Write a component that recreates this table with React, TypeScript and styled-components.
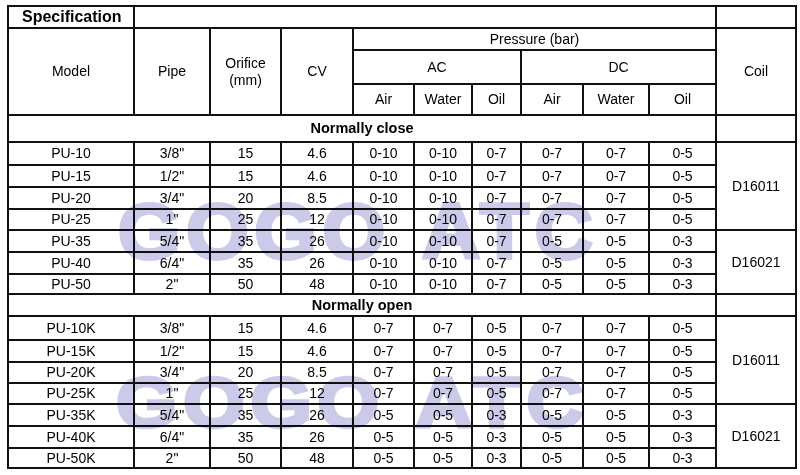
import React from "react";
import styled, { createGlobalStyle } from "styled-components";

const Global = createGlobalStyle`
  html, body { margin: 0; padding: 0; background: #fff; }
  body { font-family: "Liberation Sans", Arial, sans-serif; color: #000; }
`;

const Page = styled.div`
  position: relative;
  width: 800px;
  height: 475px;
  padding: 5px 0 0 7px;
  box-sizing: border-box;
  overflow: hidden;
`;

const Table = styled.table`
  border-collapse: collapse;
  table-layout: fixed;
  width: 788px;
  font-size: 14px;
  line-height: 1.15;
`;

const Row = styled.tr<{ $h: number }>`
  height: ${(p) => p.$h}px;
`;

const Cell = styled.td<{ $align?: "left" | "center"; $bold?: boolean; $size?: number }>`
  border: 2px solid #111;
  padding: 0;
  text-align: ${(p) => p.$align ?? "center"};
  vertical-align: middle;
  font-weight: ${(p) => (p.$bold ? 700 : 400)};
  font-size: ${(p) => (p.$size ? `${p.$size}px` : "inherit")};
  white-space: nowrap;
`;

const SpecCell = styled(Cell)`
  padding-left: 13px;
`;

const Watermark = styled.div<{ $top: number; $left: number; $sx: number; $sy: number }>`
  position: absolute;
  top: ${(p) => p.$top}px;
  left: ${(p) => p.$left}px;
  font-family: "Liberation Sans", Arial, sans-serif;
  font-weight: 700;
  font-size: 80px;
  line-height: 1;
  letter-spacing: 6px;
  word-spacing: 6px;
  white-space: nowrap;
  color: #cbcbe9;
  -webkit-text-stroke: 4px #cbcbe9;
  mix-blend-mode: multiply;
  pointer-events: none;
  transform-origin: 0 0;
  transform: scale(${(p) => p.$sx}, ${(p) => p.$sy});
`;

const colWidths = [126, 76, 71, 72, 61, 58, 49, 62, 66, 67, 80];

type DataRow = [string, string, string, string, string, string, string, string, string, string];

const closeRows: DataRow[] = [
  ["PU-10", '3/8"', "15", "4.6", "0-10", "0-10", "0-7", "0-7", "0-7", "0-5"],
  ["PU-15", '1/2"', "15", "4.6", "0-10", "0-10", "0-7", "0-7", "0-7", "0-5"],
  ["PU-20", '3/4"', "20", "8.5", "0-10", "0-10", "0-7", "0-7", "0-7", "0-5"],
  ["PU-25", '1"', "25", "12", "0-10", "0-10", "0-7", "0-7", "0-7", "0-5"],
  ["PU-35", '5/4"', "35", "26", "0-10", "0-10", "0-7", "0-5", "0-5", "0-3"],
  ["PU-40", '6/4"', "35", "26", "0-10", "0-10", "0-7", "0-5", "0-5", "0-3"],
  ["PU-50", '2"', "50", "48", "0-10", "0-10", "0-7", "0-5", "0-5", "0-3"],
];

const openRows: DataRow[] = [
  ["PU-10K", '3/8"', "15", "4.6", "0-7", "0-7", "0-5", "0-7", "0-7", "0-5"],
  ["PU-15K", '1/2"', "15", "4.6", "0-7", "0-7", "0-5", "0-7", "0-7", "0-5"],
  ["PU-20K", '3/4"', "20", "8.5", "0-7", "0-7", "0-5", "0-7", "0-7", "0-5"],
  ["PU-25K", '1"', "25", "12", "0-7", "0-7", "0-5", "0-7", "0-7", "0-5"],
  ["PU-35K", '5/4"', "35", "26", "0-5", "0-5", "0-3", "0-5", "0-5", "0-3"],
  ["PU-40K", '6/4"', "35", "26", "0-5", "0-5", "0-3", "0-5", "0-5", "0-3"],
  ["PU-50K", '2"', "50", "48", "0-5", "0-5", "0-3", "0-5", "0-5", "0-3"],
];

const closeHeights = [23, 22, 22, 21, 22, 22, 20];
const openHeights = [24, 22, 21, 21, 22, 22, 20];

function Section({
  title,
  titleH,
  rows,
  heights,
}: {
  title: string;
  titleH: number;
  rows: DataRow[];
  heights: number[];
}) {
  return (
    <>
      <Row $h={titleH}>
        <Cell colSpan={10} $bold $size={14.5}>
          {title}
        </Cell>
        <Cell />
      </Row>
      {rows.map((r, i) => (
        <Row key={r[0]} $h={heights[i]}>
          {r.map((v, j) => (
            <Cell key={j}>{v}</Cell>
          ))}
          {i === 0 && <Cell rowSpan={4}>D16011</Cell>}
          {i === 4 && <Cell rowSpan={3}>D16021</Cell>}
        </Row>
      ))}
    </>
  );
}

export default function App() {
  return (
    <Page>
      <Global />
      <Table>
        <colgroup>
          {colWidths.map((w, i) => (
            <col key={i} style={{ width: w }} />
          ))}
        </colgroup>
        <tbody>
          <Row $h={22}>
            <SpecCell $align="left" $bold $size={16}>
              Specification
            </SpecCell>
            <Cell colSpan={9} />
            <Cell />
          </Row>
          <Row $h={22}>
            <Cell rowSpan={3}>Model</Cell>
            <Cell rowSpan={3}>Pipe</Cell>
            <Cell rowSpan={3}>
              Orifice
              <br />
              (mm)
            </Cell>
            <Cell rowSpan={3}>CV</Cell>
            <Cell colSpan={6}>Pressure (bar)</Cell>
            <Cell rowSpan={3}>Coil</Cell>
          </Row>
          <Row $h={34}>
            <Cell colSpan={3}>AC</Cell>
            <Cell colSpan={3}>DC</Cell>
          </Row>
          <Row $h={31}>
            <Cell>Air</Cell>
            <Cell>Water</Cell>
            <Cell>Oil</Cell>
            <Cell>Air</Cell>
            <Cell>Water</Cell>
            <Cell>Oil</Cell>
          </Row>
          <Section title="Normally close" titleH={27} rows={closeRows} heights={closeHeights} />
          <Section title="Normally open" titleH={22} rows={openRows} heights={openHeights} />
        </tbody>
      </Table>
      <Watermark $top={192} $left={118} $sx={1} $sy={0.98}>
        GOGO ATC
      </Watermark>
      <Watermark $top={369} $left={116} $sx={0.985} $sy={0.87}>
        GOGO ATC
      </Watermark>
    </Page>
  );
}
